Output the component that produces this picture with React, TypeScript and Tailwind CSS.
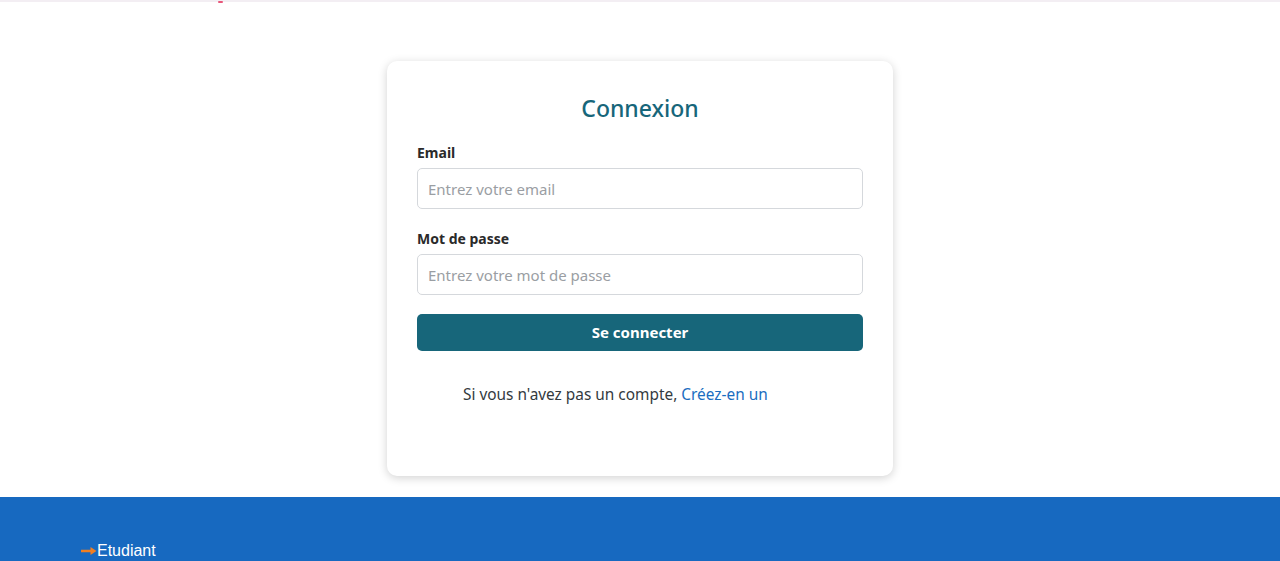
import { useState } from "react"

export default function App() {
	const [email, setEmail] = useState("")
	const [password, setPassword] = useState("")

	return (
		<div className="min-h-[561px] flex flex-col bg-white" style={{ fontFamily: "'Noto Sans', 'Open Sans', sans-serif" }}>
			<div className="h-[2px] bg-[#f3eef3] relative">
				<span className="absolute left-[218px] top-[1px] w-[5px] h-[2px] bg-[#e8577a] rounded-full" />
			</div>

			<main className="flex justify-center pt-[59px] pb-[21px]">
				<div className="w-[506px] bg-white rounded-[10px] shadow-[0_2px_10px_rgba(0,0,0,0.18)] px-[30px] pt-[31px] pb-[69px]">
					<h1 className="text-center text-[23px] font-medium text-[#17667a] leading-[32px] mb-[19px]">Connexion</h1>
					<form onSubmit={(e) => e.preventDefault()}>
						<label className="block text-[14px] font-bold text-[#2a2a2a] leading-[20px] mb-[5px]">Email</label>
						<input
							type="email"
							value={email}
							onChange={(e) => setEmail(e.target.value)}
							placeholder="Entrez votre email"
							className="w-full h-[41px] border border-[#d5d8dc] rounded-[5px] px-[10px] text-[15px] text-[#333] placeholder:text-[#9a9ea3] outline-none"
						/>
						<label className="block text-[14px] font-bold text-[#2a2a2a] leading-[20px] mt-[20px] mb-[5px]">Mot de passe</label>
						<input
							type="password"
							value={password}
							onChange={(e) => setPassword(e.target.value)}
							placeholder="Entrez votre mot de passe"
							className="w-full h-[41px] border border-[#d5d8dc] rounded-[5px] px-[10px] text-[15px] text-[#333] placeholder:text-[#9a9ea3] outline-none"
						/>
						<button
							type="submit"
							className="w-full h-[37px] mt-[19px] bg-[#17667a] text-white text-[15px] font-bold rounded-[5px]"
						>
							Se connecter
						</button>
					</form>
					<p className="mt-[32px] pl-[46px] text-[15.4px] text-[#333a40] leading-[24px]">
						Si vous n'avez pas un compte, <a href="#" className="text-[#1a6dbf]">Créez-en un</a>
					</p>
				</div>
			</main>

			<footer className="flex-1 bg-[#1769c0] pt-[45px] pl-[80px]">
				<div className="flex items-center text-white text-[16px] leading-[18px]" style={{ fontFamily: "'Liberation Sans', Arial, sans-serif" }}>
					<svg width="17" height="10" viewBox="0 0 17 10">
						<path d="M1 5H12" stroke="#f07f22" strokeWidth="2.5" />
						<path d="M10.5 1L16.5 5L10.5 9Z" fill="#f07f22" />
					</svg>
					<span>Etudiant</span>
				</div>
			</footer>
		</div>
	)
}
